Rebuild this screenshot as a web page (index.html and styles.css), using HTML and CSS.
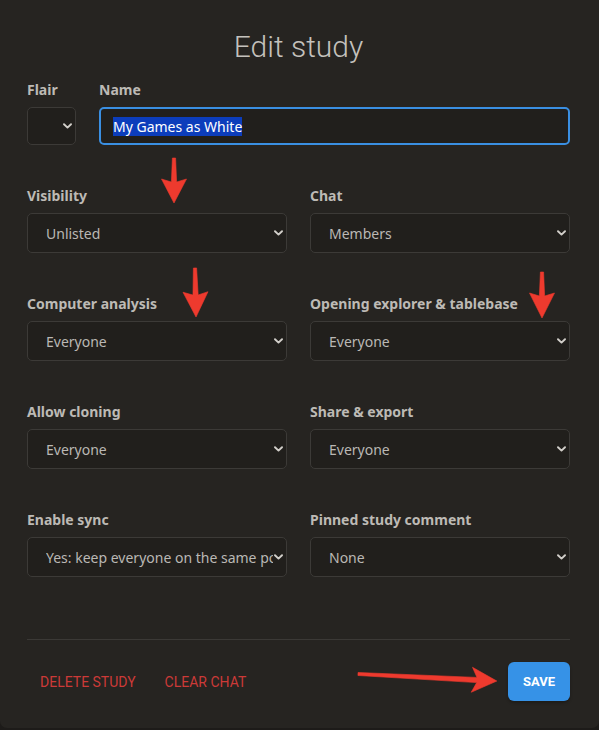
FILE: index.html
```html
<!DOCTYPE html>
<html lang="en">
<head>
<meta charset="utf-8">
<title>Edit study</title>
<link rel="stylesheet" href="styles.css">
</head>
<body>
<div class="dialog">
  <h2 class="title">Edit study</h2>

  <div class="row-top">
    <div class="field field-flair">
      <label class="label">Flair</label>
      <div class="select-wrap">
        <select class="select"><option></option></select>
        <svg class="chev" viewBox="0 0 9 6"><path d="M1 1.2 L4.5 4.6 L8 1.2"/></svg>
      </div>
    </div>
    <div class="field field-name">
      <label class="label">Name</label>
      <div class="input"><span class="selected">My Games as White</span></div>
    </div>
  </div>

  <div class="grid">
    <div class="field">
      <label class="label">Visibility</label>
      <div class="select-wrap">
        <select class="select"><option>Unlisted</option></select>
        <svg class="chev" viewBox="0 0 9 6"><path d="M1 1.2 L4.5 4.6 L8 1.2"/></svg>
      </div>
    </div>
    <div class="field">
      <label class="label">Chat</label>
      <div class="select-wrap">
        <select class="select"><option>Members</option></select>
        <svg class="chev" viewBox="0 0 9 6"><path d="M1 1.2 L4.5 4.6 L8 1.2"/></svg>
      </div>
    </div>
    <div class="field">
      <label class="label">Computer analysis</label>
      <div class="select-wrap">
        <select class="select"><option>Everyone</option></select>
        <svg class="chev" viewBox="0 0 9 6"><path d="M1 1.2 L4.5 4.6 L8 1.2"/></svg>
      </div>
    </div>
    <div class="field">
      <label class="label">Opening explorer &amp; tablebase</label>
      <div class="select-wrap">
        <select class="select"><option>Everyone</option></select>
        <svg class="chev" viewBox="0 0 9 6"><path d="M1 1.2 L4.5 4.6 L8 1.2"/></svg>
      </div>
    </div>
    <div class="field">
      <label class="label">Allow cloning</label>
      <div class="select-wrap">
        <select class="select"><option>Everyone</option></select>
        <svg class="chev" viewBox="0 0 9 6"><path d="M1 1.2 L4.5 4.6 L8 1.2"/></svg>
      </div>
    </div>
    <div class="field">
      <label class="label">Share &amp; export</label>
      <div class="select-wrap">
        <select class="select"><option>Everyone</option></select>
        <svg class="chev" viewBox="0 0 9 6"><path d="M1 1.2 L4.5 4.6 L8 1.2"/></svg>
      </div>
    </div>
    <div class="field">
      <label class="label">Enable sync</label>
      <div class="select-wrap">
        <select class="select"><option>Yes: keep everyone on the same position</option></select>
        <svg class="chev" viewBox="0 0 9 6"><path d="M1 1.2 L4.5 4.6 L8 1.2"/></svg>
      </div>
    </div>
    <div class="field">
      <label class="label">Pinned study comment</label>
      <div class="select-wrap">
        <select class="select"><option>None</option></select>
        <svg class="chev" viewBox="0 0 9 6"><path d="M1 1.2 L4.5 4.6 L8 1.2"/></svg>
      </div>
    </div>
  </div>

  <hr class="divider">

  <div class="footer">
    <div class="danger-group">
      <button class="btn-danger">Delete study</button>
      <button class="btn-danger">Clear chat</button>
    </div>
    <button class="btn-save">Save</button>
  </div>

  <svg class="annotations" viewBox="0 0 599 730" width="599" height="730">
    <g class="arrow" transform="translate(174 158) rotate(90)">
      <polygon points="0,-1.6 24,-2.6 21,-12.5 45,0 21,12.5 24,2.6 0,1.6"/>
    </g>
    <g class="arrow" transform="translate(195 268) rotate(88.8)">
      <polygon points="0,-1.6 27,-2.6 24,-12.5 49,0 24,12.5 27,2.6 0,1.6"/>
    </g>
    <g class="arrow" transform="translate(542 272) rotate(90)">
      <polygon points="0,-1.6 24,-2.6 21,-12.5 46,0 21,12.5 24,2.6 0,1.6"/>
    </g>
    <g class="arrow" transform="translate(358 674) rotate(2.9)">
      <polygon points="0,-1.5 119,-2.6 114,-12.5 139,0 114,12.5 119,2.6 0,1.5"/>
    </g>
  </svg>
</div>
</body>
</html>
```

FILE: styles.css
```css
* {
  box-sizing: border-box;
}

html, body {
  margin: 0;
  padding: 0;
}

body {
  width: 599px;
  height: 730px;
  background: #1d1b19;
  overflow: hidden;
  font-family: "Noto Sans", "Liberation Sans", sans-serif;
  color: #bab8b4;
}

.dialog {
  position: relative;
  height: 728px;
  background: #262421;
  border-radius: 0 0 7px 7px;
  padding: 29px 29px 0 27px;
}

.title {
  margin: 0;
  font-family: Roboto, "Liberation Sans", sans-serif;
  font-weight: 300;
  font-size: 30px;
  line-height: 36px;
  text-align: center;
  color: #c4c1bc;
}

.row-top {
  display: flex;
  gap: 23px;
  margin-top: 16px;
}

.field {
  display: flex;
  flex-direction: column;
}

.field-flair {
  width: 49px;
  flex: none;
}

.field-name {
  flex: 1;
}

.label {
  display: block;
  font-weight: 700;
  font-size: 14px;
  line-height: 18px;
  color: #bdbab5;
  margin-bottom: 8px;
  white-space: nowrap;
}

.select-wrap {
  position: relative;
  height: 40px;
}

.row-top .select-wrap {
  height: 38px;
}

.select {
  appearance: none;
  -webkit-appearance: none;
  width: 100%;
  height: 100%;
  margin: 0;
  background: #211f1c;
  border: 1px solid #3c3a37;
  border-radius: 5px;
  padding: 0 13px 0 18px;
  font-family: "Noto Sans", "Liberation Sans", sans-serif;
  font-size: 14px;
  color: #bab8b4;
  outline: none;
}

.chev {
  position: absolute;
  right: 4px;
  top: 50%;
  width: 9px;
  height: 6px;
  transform: translateY(-50%);
  pointer-events: none;
}

.chev path {
  fill: none;
  stroke: #d2cfca;
  stroke-width: 1.9;
  stroke-linecap: round;
  stroke-linejoin: round;
}

.input {
  height: 38px;
  border: 2px solid #3a8fe2;
  border-radius: 5px;
  background: #211f1c;
  padding: 0 12px;
  display: flex;
  align-items: center;
  font-size: 14px;
}

.selected {
  background: #0c3dbb;
  color: #ffffff;
  line-height: 19px;
}

.grid {
  display: grid;
  grid-template-columns: 260px 260px;
  column-gap: 23px;
  row-gap: 42px;
  margin-top: 42px;
}

.divider {
  margin: 62px 0 0;
  border: 0;
  border-top: 1px solid #3b3936;
  height: 0;
}

.footer {
  display: flex;
  justify-content: space-between;
  align-items: center;
  margin-top: 22px;
}

.danger-group {
  display: flex;
  gap: 3px;
}

.btn-danger {
  background: none;
  border: 0;
  height: 39px;
  padding: 0 13px;
  font-family: Roboto, "Liberation Sans", sans-serif;
  font-size: 14px;
  text-transform: uppercase;
  color: #cc3a38;
  cursor: pointer;
}

.btn-save {
  height: 39px;
  width: 62px;
  border: 0;
  border-radius: 6px;
  background: #3692e7;
  color: #ffffff;
  font-family: Roboto, "Liberation Sans", sans-serif;
  font-weight: 700;
  font-size: 13px;
  text-transform: uppercase;
  box-shadow: 0 2px 3px rgba(0, 0, 0, 0.25);
  cursor: pointer;
}

.annotations {
  position: absolute;
  left: 0;
  top: 0;
  pointer-events: none;
}

.arrow polygon {
  fill: #ee3a2e;
  stroke: #ee3a2e;
  stroke-width: 0.6;
  stroke-linejoin: round;
}
```
